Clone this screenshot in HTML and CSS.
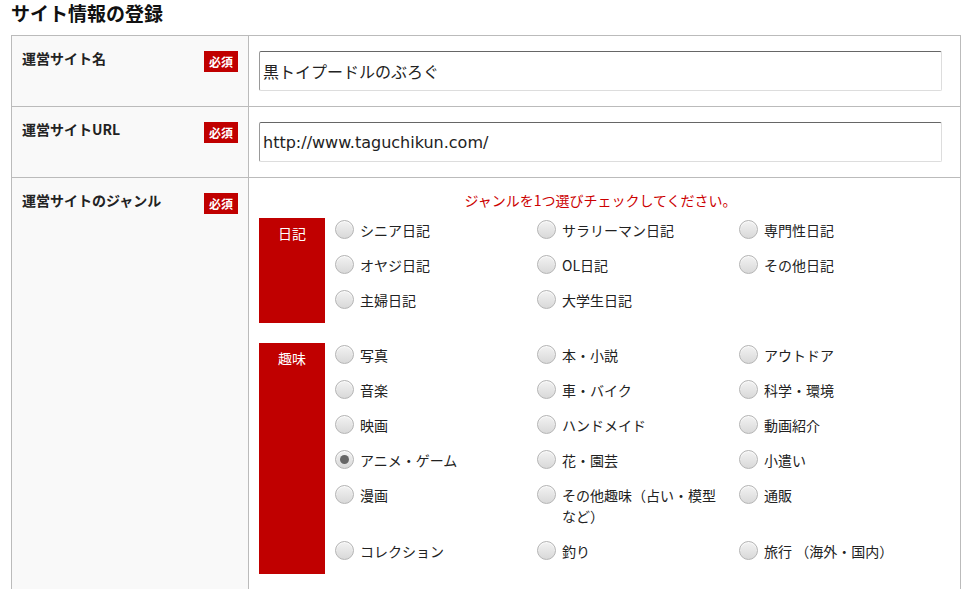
FILE: index.html
```html
<!DOCTYPE html>
<html lang="ja">
<head>
    <meta charset="UTF-8">
    <title>サイト情報の登録</title>
    <link rel="stylesheet" href="styles.css">
</head>
<body>
    <h2 class="section-title">サイト情報の登録</h2>

    <table class="form-table">
        <tr>
            <th>
                <div class="th-inner">
                    <span>運営サイト名</span>
                    <span class="required">必須</span>
                </div>
            </th>
            <td>
                <input type="text" class="text-input" value="黒トイプードルのぶろぐ">
            </td>
        </tr>
        <tr>
            <th>
                <div class="th-inner">
                    <span>運営サイトURL</span>
                    <span class="required">必須</span>
                </div>
            </th>
            <td>
                <input type="text" class="text-input url-input" value="http://www.taguchikun.com/">
            </td>
        </tr>
        <tr>
            <th>
                <div class="th-inner">
                    <span>運営サイトのジャンル</span>
                    <span class="required">必須</span>
                </div>
            </th>
            <td class="genre-cell">
                <p class="note">ジャンルを1つ選びチェックしてください。</p>

                <!-- 日記 -->
                <div class="genre-group">
                    <div class="genre-head">日記</div>
                    <ul class="genre-list">
                        <li><label><input type="radio" name="genre"><span>シニア日記</span></label></li>
                        <li><label><input type="radio" name="genre"><span>サラリーマン日記</span></label></li>
                        <li><label><input type="radio" name="genre"><span>専門性日記</span></label></li>
                        <li><label><input type="radio" name="genre"><span>オヤジ日記</span></label></li>
                        <li><label><input type="radio" name="genre"><span>OL日記</span></label></li>
                        <li><label><input type="radio" name="genre"><span>その他日記</span></label></li>
                        <li><label><input type="radio" name="genre"><span>主婦日記</span></label></li>
                        <li><label><input type="radio" name="genre"><span>大学生日記</span></label></li>
                    </ul>
                </div>

                <!-- 趣味 -->
                <div class="genre-group">
                    <div class="genre-head">趣味</div>
                    <ul class="genre-list">
                        <li><label><input type="radio" name="genre"><span>写真</span></label></li>
                        <li><label><input type="radio" name="genre"><span>本・小説</span></label></li>
                        <li><label><input type="radio" name="genre"><span>アウトドア</span></label></li>
                        <li><label><input type="radio" name="genre"><span>音楽</span></label></li>
                        <li><label><input type="radio" name="genre"><span>車・バイク</span></label></li>
                        <li><label><input type="radio" name="genre"><span>科学・環境</span></label></li>
                        <li><label><input type="radio" name="genre"><span>映画</span></label></li>
                        <li><label><input type="radio" name="genre"><span>ハンドメイド</span></label></li>
                        <li><label><input type="radio" name="genre"><span>動画紹介</span></label></li>
                        <li><label><input type="radio" name="genre" checked><span>アニメ・ゲーム</span></label></li>
                        <li><label><input type="radio" name="genre"><span>花・園芸</span></label></li>
                        <li><label><input type="radio" name="genre"><span>小遣い</span></label></li>
                        <li><label><input type="radio" name="genre"><span>漫画</span></label></li>
                        <li><label><input type="radio" name="genre"><span>その他趣味（占い・模型など）</span></label></li>
                        <li><label><input type="radio" name="genre"><span>通販</span></label></li>
                        <li><label><input type="radio" name="genre"><span>コレクション</span></label></li>
                        <li><label><input type="radio" name="genre"><span>釣り</span></label></li>
                        <li><label><input type="radio" name="genre"><span>旅行 （海外・国内）</span></label></li>
                    </ul>
                </div>
            </td>
        </tr>
    </table>
</body>
</html>
```

FILE: styles.css
```css
html, body {
    margin: 0;
    padding: 0;
    background-color: #fff;
    color: #222;
    font-family: "Noto Sans CJK JP", "Noto Sans", sans-serif;
}

body {
    padding: 0 11px;
}

.section-title {
    margin: 0;
    font-size: 19px;
    line-height: 26px;
    height: 35px;
    font-weight: bold;
    color: #111;
}

/* フォームテーブル */
.form-table {
    width: 950px;
    border-collapse: collapse;
    table-layout: fixed;
}

.form-table th,
.form-table td {
    border: 1px solid #bbb;
    vertical-align: top;
    text-align: left;
}

.form-table th {
    width: 216px;
    background-color: #f9f9f9;
    padding: 15px 10px 15px 10px;
    font-size: 14px;
    line-height: 20px;
    font-weight: bold;
    color: #222;
}

.th-inner {
    display: flex;
    justify-content: space-between;
    align-items: flex-start;
}

.th-inner span:first-child {
    margin-top: -3px;
}

.required {
    display: block;
    width: 34px;
    height: 21px;
    line-height: 21px;
    text-align: center;
    background-color: #c00000;
    color: #fff;
    font-size: 12px;
    font-weight: bold;
}

.form-table td {
    padding: 15px 18px 15px 10px;
}

.text-input {
    display: block;
    width: 100%;
    height: 40px;
    box-sizing: border-box;
    padding: 0 3px;
    font-family: "Noto Sans CJK JP", sans-serif;
    font-size: 16px;
    color: #222;
    background: #fff;
    border: 1px solid #ddd;
    border-top-color: #666;
    border-left-color: #999;
    border-radius: 2px;
    outline: none;
}

.url-input {
    font-family: "DejaVu Sans", "Noto Sans CJK JP", sans-serif;
    font-size: 16px;
}

/* ジャンル */
.form-table td.genre-cell {
    padding-top: 12px;
    padding-bottom: 40px;
}

.note {
    margin: 0 0 8px 0;
    text-align: center;
    font-size: 14px;
    line-height: 20px;
    color: #cc0000;
}

.genre-group {
    display: flex;
    align-items: stretch;
    margin-bottom: 20px;
}

.genre-group:last-child {
    margin-bottom: 0;
}

.genre-head {
    width: 66px;
    flex-shrink: 0;
    background-color: #c00000;
    color: #fff;
    text-align: center;
    font-size: 14px;
    line-height: 20px;
    padding-top: 5px;
}

.genre-list {
    list-style: none;
    margin: 0 0 0 10px;
    padding: 0;
    display: grid;
    grid-template-columns: 202px 202px 202px;
}

.genre-list li {
    padding: 2px 0 12px 0;
    font-size: 14px;
    line-height: 21px;
    color: #222;
}

.genre-list label {
    display: flex;
    align-items: flex-start;
    gap: 6px;
    padding-right: 22px;
}

.genre-list input[type="radio"] {
    appearance: none;
    -webkit-appearance: none;
    flex-shrink: 0;
    width: 19px;
    height: 19px;
    margin: 0;
    border: 1px solid #b5b5b5;
    border-radius: 50%;
    background: linear-gradient(#f2f2f2, #d9d9d9);
    box-shadow: inset 0 1px 1px rgba(255, 255, 255, 0.8);
    position: relative;
}

.genre-list input[type="radio"]:checked::after {
    content: "";
    position: absolute;
    left: 4px;
    top: 4px;
    width: 9px;
    height: 9px;
    border-radius: 50%;
    background-color: #666;
}
```
